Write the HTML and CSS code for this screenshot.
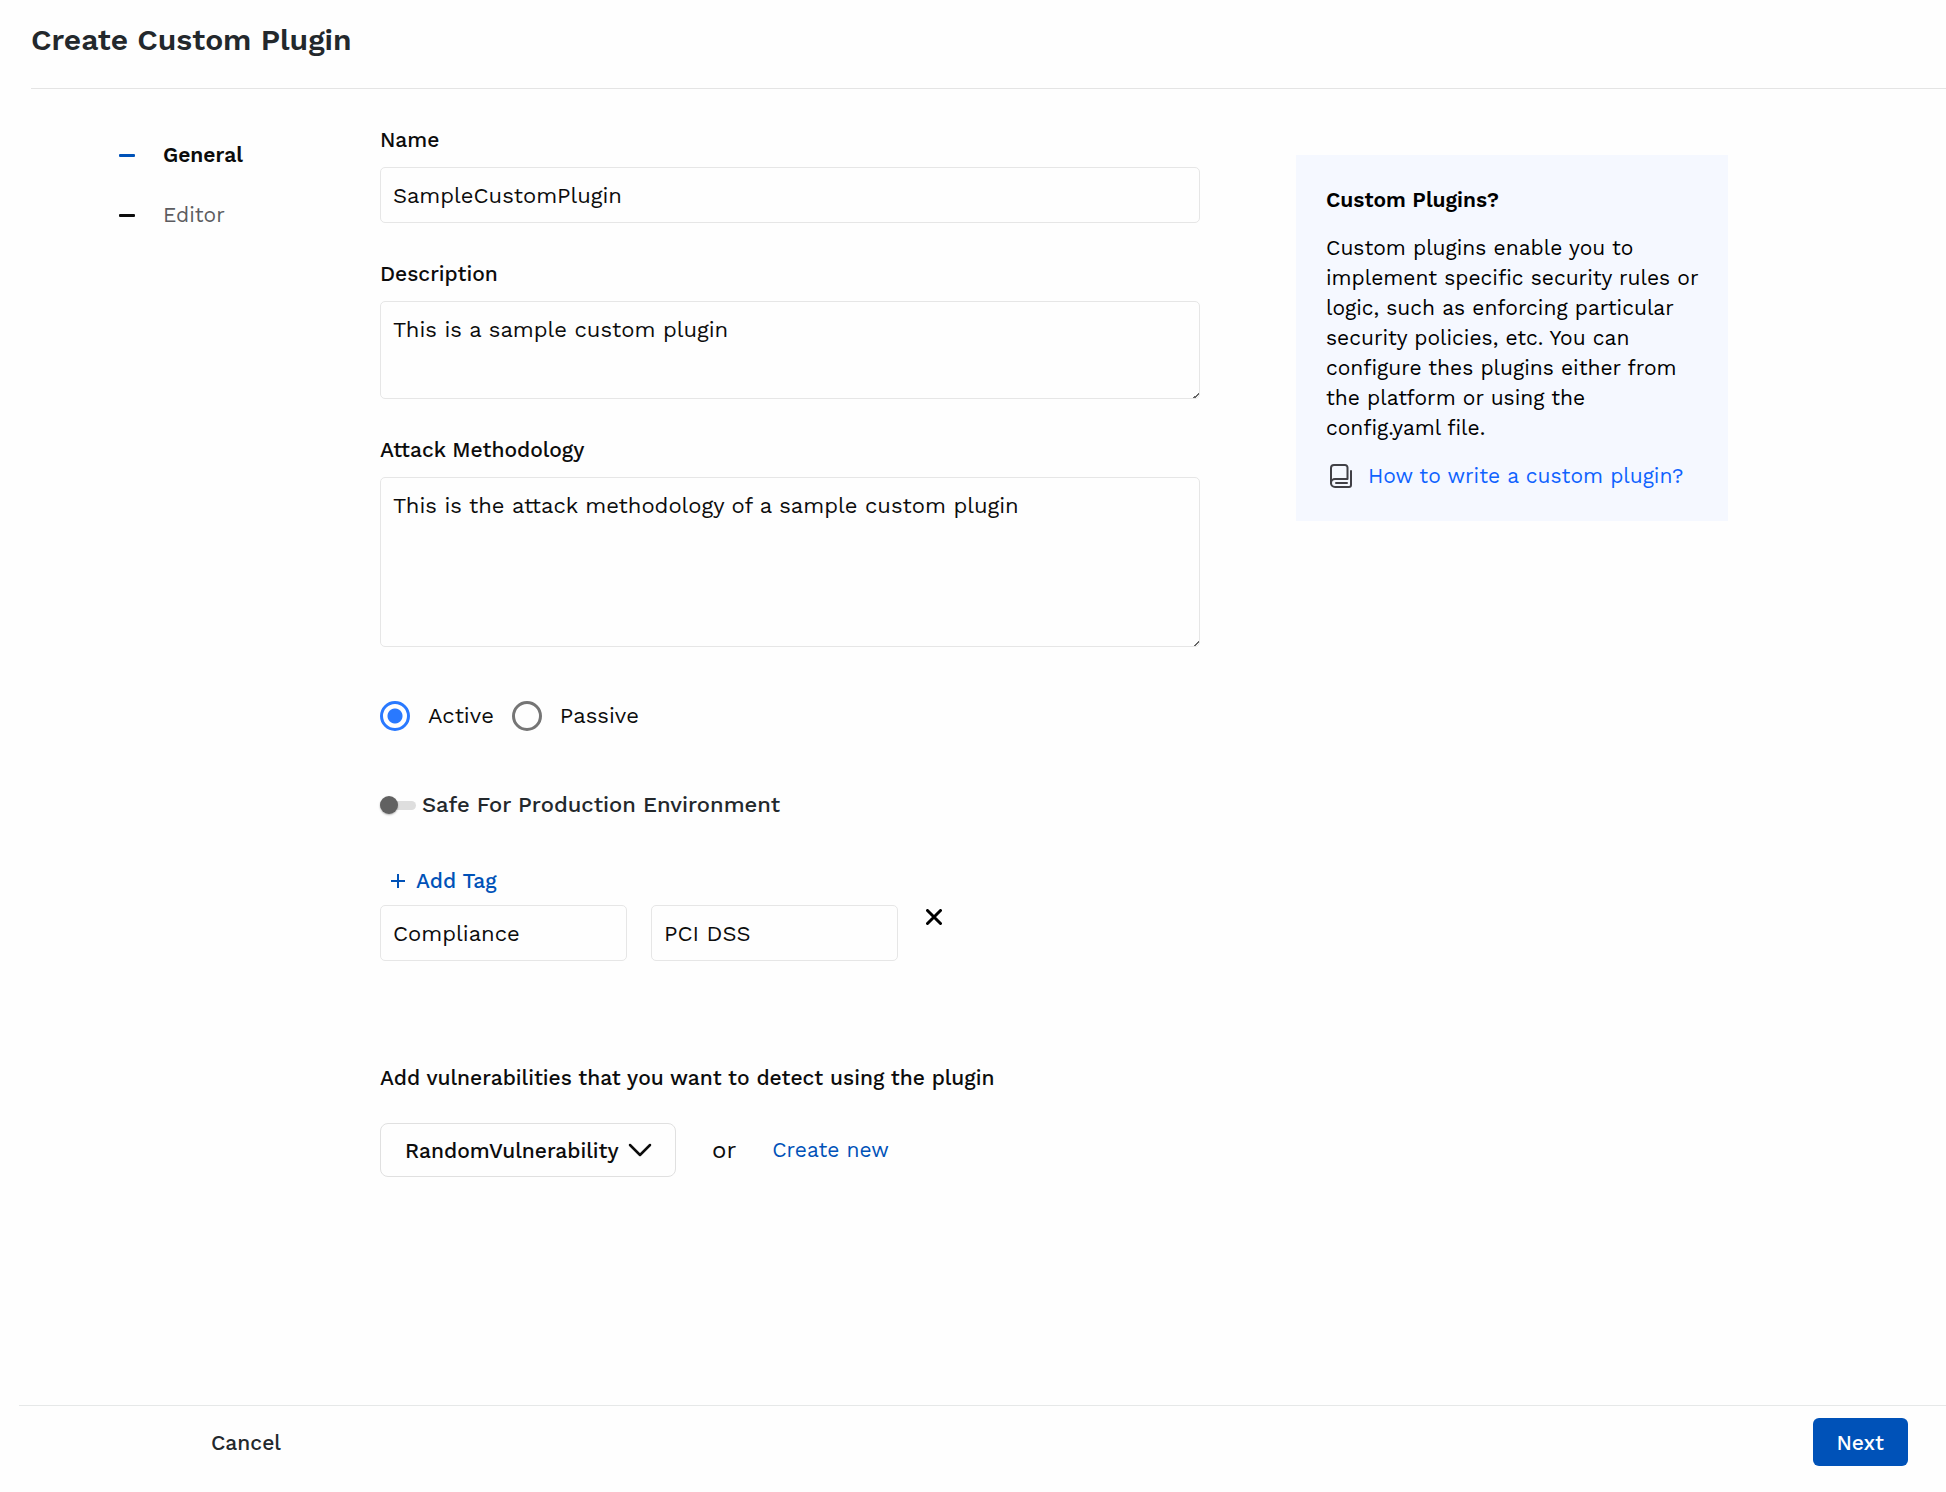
FILE: index.html
```html
<!DOCTYPE html>
<html lang="en">
<head>
    <meta charset="UTF-8">
    <meta name="viewport" content="width=device-width, initial-scale=1.0">
    <title>Create Custom Plugin</title>
    <link rel="stylesheet" href="styles.css">
</head>
<body>
    <header class="page-header">
        <h1>Create Custom Plugin</h1>
    </header>

    <main class="layout">
        <nav class="steps">
            <a href="#general" class="step active">General</a>
            <a href="#editor" class="step">Editor</a>
        </nav>

        <form class="plugin-form" id="plugin-form">
            <div class="field">
                <label for="name">Name</label>
                <input type="text" class="control" id="name" value="SampleCustomPlugin">
            </div>

            <div class="field">
                <label for="description">Description</label>
                <textarea class="control short" id="description">This is a sample custom plugin</textarea>
            </div>

            <div class="field">
                <label for="methodology">Attack Methodology</label>
                <textarea class="control tall" id="methodology">This is the attack methodology of a sample custom plugin</textarea>
            </div>

            <div class="radio-group">
                <label class="radio"><input type="radio" name="mode" checked>Active</label>
                <label class="radio"><input type="radio" name="mode">Passive</label>
            </div>

            <label class="toggle">
                <input type="checkbox" role="switch">Safe For Production Environment
            </label>

            <div class="tags">
                <button type="button" class="add-tag">
                    <svg width="14" height="14" viewBox="0 0 14 14" fill="none" stroke="currentColor" stroke-width="2"><path d="M7 0v14M0 7h14"/></svg>
                    Add Tag
                </button>
                <div class="tag-row">
                    <input type="text" class="control" aria-label="Tag name" value="Compliance">
                    <input type="text" class="control" aria-label="Tag value" value="PCI DSS">
                    <button type="button" class="remove-tag" aria-label="Remove tag">
                        <svg width="16" height="16" viewBox="0 0 16 16" fill="none" stroke="currentColor" stroke-width="3" stroke-linecap="round"><path d="M1.500 1.500l13 13M14.500 1.500l-13 13"/></svg>
                    </button>
                </div>
            </div>

            <div class="vulnerabilities">
                <label for="vulnerability">Add vulnerabilities that you want to detect using the plugin</label>
                <div class="vulnerability-row">
                    <div class="select">
                        <select id="vulnerability">
                            <option>RandomVulnerability</option>
                        </select>
                        <svg width="24" height="14" viewBox="0 0 24 14" fill="none" stroke="currentColor" stroke-width="2.5" stroke-linecap="round" stroke-linejoin="round"><path d="M2 2l10 10L22 2"/></svg>
                    </div>
                    <span class="or">or</span>
                    <a href="#new">Create new</a>
                </div>
            </div>
        </form>

        <aside class="help">
            <h2>Custom Plugins?</h2>
            <p>Custom plugins enable you to implement specific security rules or logic, such as enforcing particular security policies, etc. You can configure thes plugins either from the platform or using the config.yaml file.</p>
            <a href="#docs">
                <svg width="22" height="24" viewBox="0 0 22 24" fill="none" stroke="currentColor" stroke-width="2" stroke-linecap="round" stroke-linejoin="round">
                    <path d="M1 19V4a3 3 0 0 1 3-3h11a2.500 2.500 0 0 1 2.500 2.500V15H5a4 4 0 0 0-4 4"/>
                    <path d="M1 19a4 4 0 0 0 4 4h14a2 2 0 0 0 2-2V7M6 19h11"/>
                </svg>
                How to write a custom plugin?
            </a>
        </aside>
    </main>

    <footer class="page-footer">
        <button type="button" class="cancel">Cancel</button>
        <button type="submit" form="plugin-form" class="next">Next</button>
    </footer>
</body>
</html>
```
FILE: styles.css
```css
* {
    box-sizing: border-box;
}
body {
    display: flex;
    flex-direction: column;
    min-height: 100vh;
    margin: 0;
    font-family: 'Work Sans', 'Open Sans', sans-serif;
    font-size: 21px;
    line-height: 30px;
    color: #0c0c0c;
    background: #fefefe;
}
input, textarea, select, button {
    font: inherit;
    color: inherit;
    margin: 0;
}
button {
    padding: 0;
    border: none;
    background: none;
    cursor: pointer;
}
a {
    color: #0052b8;
    text-decoration: none;
}

.page-header {
    margin-left: 31px;
    padding: 20px 0 28px;
    border-bottom: 1px solid #e4e4e4;
}
h1 {
    margin: 0;
    font-size: 30px;
    line-height: 40px;
    font-weight: 600;
    color: #23282c;
}

.layout {
    flex: 1;
    display: grid;
    grid-template-columns: 284px minmax(0, 1fr) 432px;
    column-gap: 96px;
    align-items: start;
    padding: 36px 218px 40px 0;
}

/* steps */
.steps {
    display: flex;
    flex-direction: column;
    gap: 30px;
    padding: 15px 0 0 119px;
}
.step {
    display: flex;
    align-items: center;
    gap: 28px;
    color: #5c5c60;
}
.step::before {
    content: '';
    width: 16px;
    height: 3px;
    border-radius: 1px;
    background: #0c0c0c;
}
.step.active {
    font-weight: 600;
    color: #0c0c0c;
}
.step.active::before {
    background: #0052b8;
}

/* form */
.field {
    margin-bottom: 36px;
}
.field label, .vulnerabilities label {
    display: block;
    font-weight: 500;
}
.field label {
    margin-bottom: 12px;
}
.control {
    display: block;
    width: 100%;
    height: 56px;
    padding: 13px 12px 12px;
    border: 1px solid #e6e6e6;
    border-radius: 5px;
    background: #fefefe;
    font-size: 22px;
    outline: none;
}
.control:focus {
    border-color: #2979ff;
}
.short {
    height: 98px;
}
.tall {
    height: 170px;
}
textarea::-webkit-resizer {
    background: linear-gradient(135deg, transparent 80%, #666 80%, #666 88%, transparent 88%);
}
.radio-group {
    display: flex;
    gap: 18px;
    margin-top: 54px;
    font-size: 22px;
}
.radio {
    display: flex;
    align-items: center;
    gap: 18px;
}
.radio input {
    appearance: none;
    width: 30px;
    height: 30px;
    border: 3px solid #757575;
    border-radius: 50%;
}
.radio input:checked {
    border-color: #2979ff;
    background: radial-gradient(circle, #2979ff 7px, transparent 8px);
}
.toggle {
    display: flex;
    align-items: center;
    gap: 6px;
    margin-top: 59px;
    font-size: 22px;
    font-weight: 500;
    color: #23282c;
}
.toggle input {
    appearance: none;
    display: flex;
    align-items: center;
    width: 36px;
    height: 9px;
    border-radius: 5px;
    background: #dedede;
}
.toggle input::before {
    content: '';
    width: 18px;
    height: 18px;
    border-radius: 50%;
    background: #616161;
    box-shadow: 0 1px 2px rgba(0,0,0,0.3);
}
.toggle input:checked::before {
    margin-left: 18px;
    background: #0052b8;
}

/* tags */
.tags {
    margin-top: 46px;
}
.add-tag {
    display: flex;
    align-items: center;
    gap: 11px;
    margin: 0 0 9px 11px;
    font-weight: 500;
    color: #0052b8;
}
.tag-row {
    display: grid;
    grid-template-columns: 247px 247px auto;
    justify-content: start;
    align-items: start;
    gap: 24px;
}
.remove-tag {
    display: flex;
    padding: 4px;
    color: #000;
}

/* vulnerabilities */
.vulnerabilities {
    margin-top: 102px;
}
.vulnerability-row {
    display: flex;
    align-items: center;
    gap: 36px;
    margin-top: 30px;
}
.select {
    position: relative;
}
.select select {
    appearance: none;
    width: 296px;
    height: 54px;
    padding: 1px 50px 0 24px;
    border: 1px solid #e0e0e0;
    border-radius: 8px;
    background: #fefefe;
    font-weight: 500;
}
.select svg {
    position: absolute;
    top: 20px;
    right: 24px;
    pointer-events: none;
}
.or {
    font-size: 24px;
}

/* help card */
.help {
    margin-top: 30px;
    padding: 30px;
    background: #f5f8ff;
    color: #000;
}
.help h2 {
    margin: 0 0 18px;
    font-size: 21px;
    line-height: 30px;
    font-weight: 600;
}
.help p {
    margin: 0 0 18px;
}
.help a {
    display: flex;
    align-items: center;
    gap: 16px;
    margin-left: 4px;
    color: #0f62fe;
}
.help svg {
    color: #404046;
}

/* footer */
.page-footer {
    display: flex;
    justify-content: space-between;
    align-items: center;
    margin-left: 19px;
    padding: 12px 38px 26px 192px;
    border-top: 1px solid #e6e8e8;
}
.cancel {
    padding: 10px 0 8px;
    font-weight: 500;
    color: #23282c;
}
.next {
    padding: 10px 24px 8px;
    border-radius: 6px;
    background: #0052b8;
    font-weight: 500;
    color: #fff;
}
```
